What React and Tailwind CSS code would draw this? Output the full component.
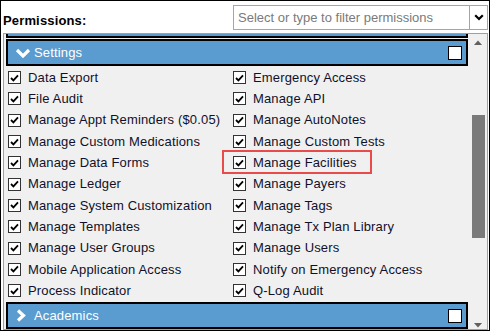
const left = [
  "Data Export",
  "File Audit",
  "Manage Appt Reminders ($0.05)",
  "Manage Custom Medications",
  "Manage Data Forms",
  "Manage Ledger",
  "Manage System Customization",
  "Manage Templates",
  "Manage User Groups",
  "Mobile Application Access",
  "Process Indicator",
];

const right = [
  "Emergency Access",
  "Manage API",
  "Manage AutoNotes",
  "Manage Custom Tests",
  "Manage Facilities",
  "Manage Payers",
  "Manage Tags",
  "Manage Tx Plan Library",
  "Manage Users",
  "Notify on Emergency Access",
  "Q-Log Audit",
];

const CheckBox = () => (
  <span className="w-[13px] h-[13px] shrink-0 border border-[#333] bg-white flex items-center justify-center">
    <svg width="9" height="8" viewBox="0 0 9 8" fill="none" stroke="#000" strokeWidth="1.8">
      <polyline points="1,4 3.4,6.4 8,1.4" />
    </svg>
  </span>
);

const Perm = ({ label, marked }) => (
  <div className="relative h-[21.3px] flex items-center gap-[7px]">
    <CheckBox />
    <span className="text-[#10102a] whitespace-nowrap tracking-[0.15px]">{label}</span>
    {marked && (
      <div className="absolute left-[-11px] top-[-2px] w-[150px] h-[24px] border-2 border-[#e94b4b]" />
    )}
  </div>
);

const SectionHeader = ({ title, open }) => (
  <div className="h-[27px] bg-[#5a9bd0] border-2 border-black flex items-center pl-[7px] pr-[4px]">
    {open ? (
      <svg width="16" height="10" viewBox="0 0 16 10" fill="none" stroke="white" strokeWidth="3.2">
        <polyline points="2,2 8,8 14,2" />
      </svg>
    ) : (
      <svg width="10" height="13" viewBox="0 0 10 13" fill="none" stroke="white" strokeWidth="3.2" className="ml-[1px] mr-[5px]">
        <polyline points="2,1.5 7.5,6.5 2,11.5" />
      </svg>
    )}
    <span className="text-white ml-[3px] tracking-[0.15px]">{title}</span>
    <span className="ml-auto w-[14px] h-[14px] bg-white border-[1.5px] border-black" />
  </div>
);

export default function App() {
  return (
    <div className="w-[490px] h-[331px] border border-black bg-white flex flex-col overflow-hidden text-[13px] font-['Liberation_Sans',Arial,sans-serif]">
      <div className="h-[32px] shrink-0 flex items-start justify-between pl-[2px] pr-[1px]">
        <span className="font-bold text-black mt-[10px] tracking-[0.15px]">Permissions:</span>
        <div className="flex h-[25px] mt-[4px]">
          <div className="w-[237px] border border-[#a5a5a5] flex items-center pl-[4px] text-[#7a7a7a]">
            Select or type to filter permissions
          </div>
          <div className="w-[18px] border border-l-0 border-[#a5a5a5] flex items-center justify-center">
            <svg width="10" height="7" viewBox="0 0 10 7" fill="none" stroke="#000" strokeWidth="2.2">
              <polyline points="1.2,1.2 5,5 8.8,1.2" />
            </svg>
          </div>
        </div>
      </div>

      <div className="flex-1 min-h-0 ml-[2px] mr-[1px] border border-[#a0a0a0] bg-[#f0f0f0] flex">
        <div className="flex-1 overflow-hidden pl-[2px] pr-[1px]">
          <div className="h-[4px] bg-[#5a9bd0] border-x-2 border-b-2 border-black" />
          <div className="mt-[1px]">
            <SectionHeader title="Settings" open />
          </div>
          <div className="grid grid-cols-[225px_1fr] pl-[2px] pt-[1px] pb-[1px]">
            {left.map((l, i) => (
              <div key={l} className="contents">
                <Perm label={l} />
                <Perm label={right[i]} marked={right[i] === "Manage Facilities"} />
              </div>
            ))}
          </div>
          <SectionHeader title="Academics" />
        </div>

        <div className="w-[18px] shrink-0 flex flex-col">
          <div className="h-[17px] flex items-center justify-center">
            <svg width="8" height="5" viewBox="0 0 8 5">
              <polygon points="0,5 4,0.5 8,5" fill="#606060" />
            </svg>
          </div>
          <div className="flex-1 flex flex-col items-center">
            <div className="mt-[64px] w-[13px] h-[123px] bg-[#7a7a7a]" />
          </div>
          <div className="h-[17px] flex items-end justify-center pb-[1px]">
            <svg width="8" height="5" viewBox="0 0 8 5">
              <polygon points="0,0 8,0 4,4.5" fill="#606060" />
            </svg>
          </div>
        </div>
      </div>
    </div>
  );
}
